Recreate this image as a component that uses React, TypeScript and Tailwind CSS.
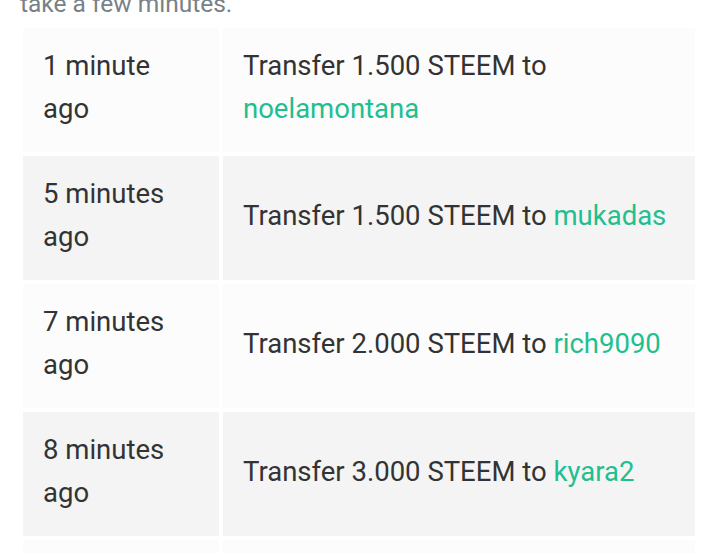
import React from 'react';

const rows = [
  { time: '1 minute ago', amount: '1.500', to: 'noelamontana' },
  { time: '5 minutes ago', amount: '1.500', to: 'mukadas' },
  { time: '7 minutes ago', amount: '2.000', to: 'rich9090' },
  { time: '8 minutes ago', amount: '3.000', to: 'kyara2' },
  { time: '9 minutes ago', amount: '1.000', to: 'steemit' },
];

export default function App() {
  return (
    <div className="h-[553px] overflow-hidden bg-white font-['Roboto',sans-serif] text-[27.5px] leading-[43px] text-[#333]">
      <p className="-mt-[16px] h-[42px] pl-5 text-[24.5px] leading-[40px] text-[#788187]">take a few minutes.</p>
      <table className="ml-[19px] -mt-[2px] w-[680px] table-fixed border-separate border-spacing-1">
        <colgroup>
          <col className="w-[196px]" />
          <col />
        </colgroup>
        <tbody>
          {rows.map((row, i) => (
            <tr key={i} className={i % 2 === 0 ? 'bg-[#fcfcfc]' : 'bg-[#f4f4f4]'}>
              <td className="px-5 pt-4 pb-[22px] align-middle">{row.time}</td>
              <td className="px-5 pt-4 pb-[22px] align-middle">
                Transfer {row.amount} STEEM to{' '}
                <a href="#" className="text-[#1fbf8f]">
                  {row.to}
                </a>
              </td>
            </tr>
          ))}
        </tbody>
      </table>
    </div>
  );
}
